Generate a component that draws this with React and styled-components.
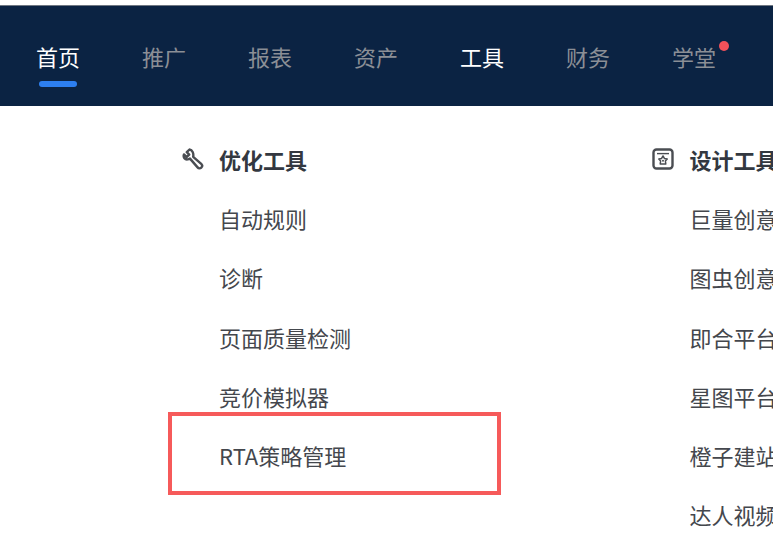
import styled, { createGlobalStyle } from 'styled-components';

const GlobalStyle = createGlobalStyle`
  html, body {
    margin: 0;
    padding: 0;
    background: #fff;
    overflow: hidden;
  }
  body {
    font-family: "Noto Sans CJK SC", "Liberation Sans", sans-serif;
  }
`;

const Page = styled.div`
  width: 773px;
  height: 542px;
  overflow: hidden;
  padding-top: 5px;
  box-sizing: border-box;
`;

const NavBar = styled.nav`
  height: 101px;
  box-sizing: border-box;
  background: #0b2343;
  border-top: 1px solid #6f7782;
  display: flex;
  gap: 62px;
  padding-left: 36px;
`;

const NavItem = styled.div`
  position: relative;
  width: 44px;
  flex: none;
  white-space: nowrap;
  font-size: 22px;
  line-height: 30px;
  padding-top: 35px;
  color: ${(props) => (props.$active ? '#ffffff' : '#8b8f96')};
`;

const Underline = styled.span`
  position: absolute;
  left: 3px;
  top: 75px;
  width: 38px;
  height: 6px;
  border-radius: 3px;
  background: #2d7ff0;
`;

const Dot = styled.span`
  position: absolute;
  right: -13px;
  top: 35px;
  width: 10px;
  height: 10px;
  border-radius: 50%;
  background: #f4515a;
`;

const Columns = styled.div`
  display: flex;
  padding-left: 180px;
  padding-top: 38px;
`;

const Column = styled.section`
  flex: none;
  width: ${(props) => props.$width}px;
`;

const Heading = styled.h3`
  margin: 0;
  display: flex;
  align-items: center;
  gap: 14px;
  height: 30px;
  font-size: 22px;
  font-weight: 700;
  color: #333840;
  white-space: nowrap;
`;

const IconBox = styled.span`
  width: 25px;
  height: 25px;
  flex: none;
  display: flex;
  align-items: center;
  justify-content: center;
  color: #4a4d52;
`;

const List = styled.ul`
  list-style: none;
  margin: 29px 0 0;
  padding: 0 0 0 39px;
  display: flex;
  flex-direction: column;
  gap: 29.3px;
`;

const Item = styled.li`
  position: relative;
  height: 30px;
  line-height: 30px;
  font-size: 22px;
  color: #44474d;
  white-space: nowrap;

  ${(props) =>
    props.$marked &&
    `
    &::after {
      content: '';
      position: absolute;
      left: -51px;
      top: -28px;
      width: 333px;
      height: 83px;
      box-sizing: border-box;
      border: 4px solid #f65a5a;
    }
  `}
`;

const WrenchIcon = () => (
  <svg width="22" height="22" viewBox="0 0 22 22" fill="none" stroke="currentColor" strokeWidth="2.4" strokeLinejoin="round">
    <path d="M7.5 1.5 L4.8 4.2 L7.2 6.6 L4.6 9 L2 6.4 C0.8 9.4 3 11.8 5.6 11.4 C6.6 11.3 7.4 11 8 10.6 L15.6 19.4 C16.6 20.6 18.2 20.6 19.3 19.6 C20.4 18.6 20.4 17.2 19.5 16.2 L11.2 8.8 C11.8 5.2 10.4 1.8 7.5 1.5 Z" />
  </svg>
);

const DesignIcon = () => (
  <svg width="22" height="22" viewBox="0 0 22 22" fill="none" stroke="currentColor" strokeWidth="2.4">
    <rect x="1.5" y="1.5" width="19" height="19" rx="3" />
    <path d="M5 5.6 H17" strokeWidth="1.4" />
    <path d="M11 8 L12.4 10.4 L15.2 11 L13.4 13 L13.8 16 H8.2 L8.6 13 L6.8 11 L9.6 10.4 Z" strokeWidth="1.5" strokeLinejoin="round" />
    <circle cx="11" cy="12.8" r="1" fill="currentColor" stroke="none" />
  </svg>
);

const navItems = [
  { label: '首页', active: true, underline: true },
  { label: '推广' },
  { label: '报表' },
  { label: '资产' },
  { label: '工具', active: true },
  { label: '财务' },
  { label: '学堂', dot: true },
];

const optimizeItems = ['自动规则', '诊断', '页面质量检测', '竞价模拟器', 'RTA策略管理'];
const designItems = ['巨量创意', '图虫创意', '即合平台', '星图平台', '橙子建站', '达人视频'];

function App() {
  return (
    <Page>
      <GlobalStyle />
      <NavBar>
        {navItems.map((item) => (
          <NavItem key={item.label} $active={item.active}>
            {item.label}
            {item.underline && <Underline />}
            {item.dot && <Dot />}
          </NavItem>
        ))}
      </NavBar>
      <Columns>
        <Column $width={470.5}>
          <Heading>
            <IconBox>
              <WrenchIcon />
            </IconBox>
            优化工具
          </Heading>
          <List>
            {optimizeItems.map((text) => (
              <Item key={text} $marked={text.startsWith('RTA')}>
                {text}
              </Item>
            ))}
          </List>
        </Column>
        <Column $width={200}>
          <Heading>
            <IconBox>
              <DesignIcon />
            </IconBox>
            设计工具
          </Heading>
          <List>
            {designItems.map((text) => (
              <Item key={text}>{text}</Item>
            ))}
          </List>
        </Column>
      </Columns>
    </Page>
  );
}

export default App;
